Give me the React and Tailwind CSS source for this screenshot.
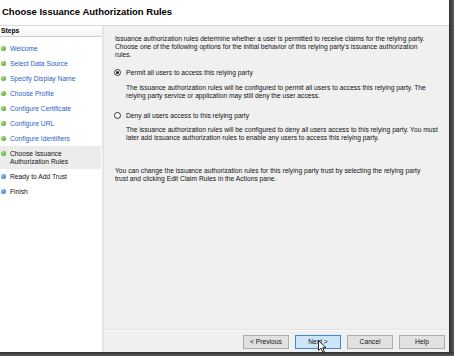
import React from 'react';

const steps = [
  { label: 'Welcome', state: 'done' },
  { label: 'Select Data Source', state: 'done' },
  { label: 'Specify Display Name', state: 'done' },
  { label: 'Choose Profile', state: 'done' },
  { label: 'Configure Certificate', state: 'done' },
  { label: 'Configure URL', state: 'done' },
  { label: 'Configure Identifiers', state: 'done' },
  { label: ['Choose Issuance', 'Authorization Rules'], state: 'current' },
  { label: 'Ready to Add Trust', state: 'todo' },
  { label: 'Finish', state: 'todo' },
];

function Bullet({ blue }) {
  return (
    <span
      className={`block w-[5px] h-[5px] rounded-full shrink-0 ${
        blue
          ? 'bg-[radial-gradient(circle_at_35%_35%,#8fc0f5,#1f68d0)]'
          : 'bg-[radial-gradient(circle_at_35%_35%,#a6e07a,#3c9a1e)]'
      }`}
    />
  );
}

function StepRow({ step }) {
  const current = step.state === 'current';
  return (
    <div
      className={`flex items-start gap-[4.5px] pl-[0.5px] ${
        current ? 'h-[23px] pt-[3.5px] bg-[#ececec]' : 'h-[15px] pt-[3.5px]'
      }`}
    >
      <div className="h-[8px] flex items-center">
        <Bullet blue={step.state === 'todo'} />
      </div>
      <div
        className={`leading-[8px] whitespace-nowrap ${
          step.state === 'done' ? 'text-[#2a62c9]' : 'text-[#111]'
        }`}
      >
        {Array.isArray(step.label)
          ? step.label.map((l) => <div key={l}>{l}</div>)
          : step.label}
      </div>
    </div>
  );
}

function Radio({ checked, children }) {
  return (
    <div className="flex items-center h-[8px] ml-[-1px] gap-[5px]">
      <span className="w-[7px] h-[7px] rounded-full border border-[#333] bg-white flex items-center justify-center shrink-0">
        {checked && <span className="block w-[3px] h-[3px] rounded-full bg-[#1a1a1a]" />}
      </span>
      <span className="leading-[8px] whitespace-nowrap">{children}</span>
    </div>
  );
}

function Button({ children, active }) {
  return (
    <div
      className={`w-[46px] h-[14px] flex items-center justify-center border leading-none ${
        active ? 'bg-[#cde5f8] border-[#3d8ad6]' : 'bg-[#e1e1e1] border-[#adadad]'
      }`}
    >
      {children}
    </div>
  );
}

export default function App() {
  return (
    <div className="w-[454px] h-[356px] flex flex-col font-['Liberation_Sans',Arial,sans-serif] text-[6.7px] text-[#111] overflow-hidden">
      <div className="flex h-[352px]">
        {/* dialog */}
        <div className="w-[449px] flex flex-col">
          <div className="h-[26px] bg-white border-b border-[#d9d9d9] flex items-center pl-[2px] pb-px">
            <span className="text-[9.5px] font-bold text-black whitespace-nowrap">
              Choose Issuance Authorization Rules
            </span>
          </div>

          <div className="flex flex-1 min-h-0">
            {/* steps panel */}
            <div className="w-[104px] bg-white border-r-2 border-r-[#e4e4e4] flex flex-col">
              <div className="h-[11px] border-b border-[#cfcfcf] bg-gradient-to-b from-white to-[#f4f4f4] flex items-end pb-[1px] pl-[1px]">
                <span className="font-bold leading-[8px] text-black">Steps</span>
              </div>
              <div className="pt-[4px] pr-[1px]">
                {steps.map((s) => (
                  <StepRow key={Array.isArray(s.label) ? s.label[0] : s.label} step={s} />
                ))}
              </div>
            </div>

            {/* content panel */}
            <div className="flex-1 bg-[#f0f0f0] flex flex-col relative">
              <div className="flex-1 pl-[11px] pt-[9.4px] leading-[7.8px] whitespace-nowrap">
                <div>
                  Issuance authorization rules determine whether a user is permitted to receive claims for the relying party.
                  <br />
                  Choose one of the following options for the initial behavior of this relying party's issuance authorization
                  <br />
                  rules.
                </div>

                <div className="mt-[10px]">
                  <Radio checked>Permit all users to access this relying party</Radio>
                </div>
                <div className="mt-[7.5px] ml-[11px]">
                  The issuance authorization rules will be configured to permit all users to access this relying party. The
                  <br />
                  relying party service or application may still deny the user access.
                </div>

                <div className="mt-[12px]">
                  <Radio>Deny all users access to this relying party</Radio>
                </div>
                <div className="mt-[6.5px] ml-[11px]">
                  The issuance authorization rules will be configured to deny all users access to this relying party. You must
                  <br />
                  later add issuance authorization rules to enable any users to access this relying party.
                </div>

                <div className="mt-[25px]">
                  You can change the issuance authorization rules for this relying party trust by selecting the relying party
                  <br />
                  trust and clicking Edit Claim Rules in the Actions pane.
                </div>
              </div>

              <div className="h-[22px] border-t border-t-[#fbfbfb] shadow-[0_-1px_0_#e2e2e2] flex justify-end items-start pt-[4px] pr-[4px] gap-[6px]">
                <Button>&lt; Previous</Button>
                <Button active>Next &gt;</Button>
                <Button>Cancel</Button>
                <Button>Help</Button>
              </div>

              {/* mouse pointer over Next */}
              <svg
                className="absolute left-[214px] top-[314px]"
                width="9"
                height="13"
                viewBox="0 0 9 13"
              >
                <path
                  d="M0.5 0.5 L0.5 10.5 L3 8.2 L4.8 12.3 L6.4 11.6 L4.7 7.7 L8 7.7 Z"
                  fill="#fff"
                  stroke="#111"
                  strokeWidth="0.9"
                  strokeLinejoin="round"
                />
              </svg>
            </div>
          </div>
        </div>
        {/* right drop shadow */}
        <div className="w-[5px] bg-gradient-to-r from-[#2f2f2f] to-[#5c5c5c]" />
      </div>
      {/* bottom drop shadow */}
      <div className="h-[4px] bg-gradient-to-b from-[#2f2f2f] to-[#5c5c5c]" />
    </div>
  );
}
